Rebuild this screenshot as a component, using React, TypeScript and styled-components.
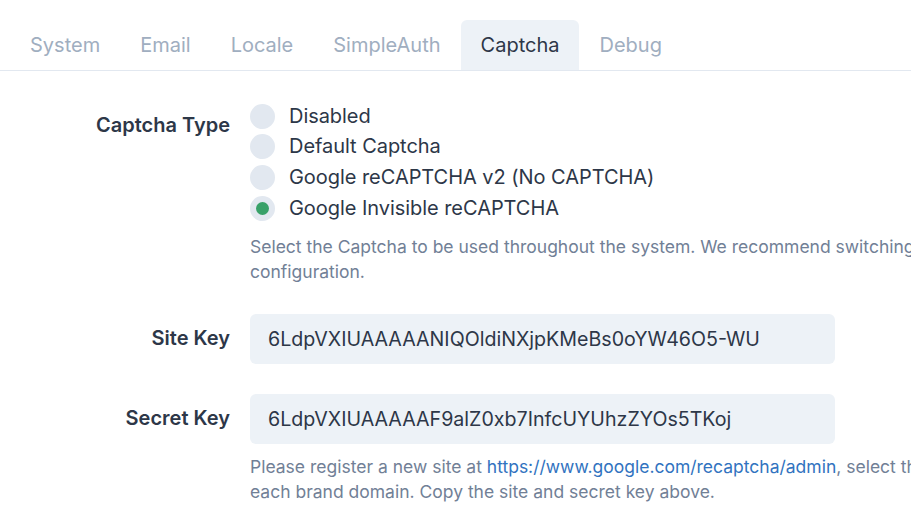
import * as React from 'react';
import styled, { createGlobalStyle } from 'styled-components';

const GlobalStyle = createGlobalStyle`
  html, body {
    margin: 0;
    padding: 0;
    background: #ffffff;
    overflow: hidden;
  }
  body {
    font-family: Inter, "Noto Sans", "Liberation Sans", sans-serif;
    color: #2d3748;
  }
`;

const Page = styled.div`
  width: 911px;
  height: 528px;
  padding-top: 20px;
  box-sizing: border-box;
  overflow: hidden;
`;

const TabBar = styled.div`
  display: flex;
  padding-left: 10px;
  border-bottom: 1px solid #e2e8f0;
`;

const Tab = styled.div<{ $active?: boolean }>`
  padding: 12.5px 20px;
  font-size: 20px;
  line-height: 25px;
  color: ${(p) => (p.$active ? '#2d3748' : '#a0aec0')};
  background: ${(p) => (p.$active ? '#edf2f7' : 'transparent')};
  border-radius: 6px 6px 0 0;
  white-space: nowrap;
`;

const Form = styled.div`
  display: flex;
  flex-direction: column;
  padding-top: 30px;
`;

const Row = styled.div<{ $mt?: number }>`
  display: grid;
  grid-template-columns: 230px 1fr;
  column-gap: 20px;
  margin-top: ${(p) => p.$mt ?? 0}px;
`;

const Label = styled.div<{ $pt?: number }>`
  text-align: right;
  font-size: 20px;
  line-height: 25px;
  font-weight: 600;
  color: #2d3748;
  padding-top: ${(p) => p.$pt ?? 0}px;
  white-space: nowrap;
`;

const Control = styled.div`
  min-width: 0;
`;

const RadioList = styled.div`
  display: flex;
  flex-direction: column;
`;

const RadioItem = styled.label`
  display: flex;
  align-items: center;
  height: 30.67px;
  font-size: 20px;
  line-height: 25px;
  letter-spacing: -0.05px;
  color: #2d3748;
  white-space: nowrap;
`;

const RadioCircle = styled.span<{ $checked?: boolean }>`
  width: 25px;
  height: 25px;
  border-radius: 50%;
  background: #e2e8f0;
  display: flex;
  align-items: center;
  justify-content: center;
  margin-right: 14px;
  flex-shrink: 0;

  &::after {
    content: '';
    width: 13px;
    height: 13px;
    border-radius: 50%;
    background: #38a169;
    display: ${(p) => (p.$checked ? 'block' : 'none')};
  }
`;

const Help = styled.p`
  margin: 10px 0 0;
  font-size: 17.5px;
  line-height: 25px;
  color: #718096;
  white-space: nowrap;
`;

const Link = styled.a`
  color: #3173c0;
  text-decoration: none;
`;

const Input = styled.input`
  display: block;
  box-sizing: border-box;
  width: 585px;
  height: 50px;
  border: none;
  border-radius: 6px;
  background: #edf2f7;
  padding: 0 18px;
  font-family: Inter, "Noto Sans", "Liberation Sans", sans-serif;
  font-size: 19.64px;
  color: #2d3748;
  outline: none;
`;

const tabs = ['System', 'Email', 'Locale', 'SimpleAuth', 'Captcha', 'Debug'];

const captchaTypes = [
  'Disabled',
  'Default Captcha',
  'Google reCAPTCHA v2 (No CAPTCHA)',
  'Google Invisible reCAPTCHA',
];

const App = () => {
  const [selected, setSelected] = React.useState(3);

  return (
    <>
      <GlobalStyle />
      <Page>
        <TabBar>
          {tabs.map((t) => (
            <Tab key={t} $active={t === 'Captcha'}>
              {t}
            </Tab>
          ))}
        </TabBar>
        <Form>
          <Row>
            <Label $pt={12}>Captcha Type</Label>
            <Control>
              <RadioList>
                {captchaTypes.map((c, i) => (
                  <RadioItem key={c} onClick={() => setSelected(i)}>
                    <RadioCircle $checked={selected === i} />
                    {c}
                  </RadioItem>
                ))}
              </RadioList>
              <Help>
                Select the Captcha to be used throughout the system. We recommend switching to Google reCAPTCHA after initial
                <br />
                configuration.
              </Help>
            </Control>
          </Row>
          <Row $mt={30}>
            <Label $pt={12.5}>Site Key</Label>
            <Control>
              <Input readOnly value="6LdpVXIUAAAAANIQOldiNXjpKMeBs0oYW46O5-WU" />
            </Control>
          </Row>
          <Row $mt={30}>
            <Label $pt={12.5}>Secret Key</Label>
            <Control>
              <Input readOnly value="6LdpVXIUAAAAAF9alZ0xb7InfcUYUhzZYOs5TKoj" />
              <Help>
                Please register a new site at <Link href="#">https://www.google.com/recaptcha/admin</Link>, select the reCAPTCHA type and add
                <br />
                each brand domain. Copy the site and secret key above.
              </Help>
            </Control>
          </Row>
        </Form>
      </Page>
    </>
  );
};

export default App;
